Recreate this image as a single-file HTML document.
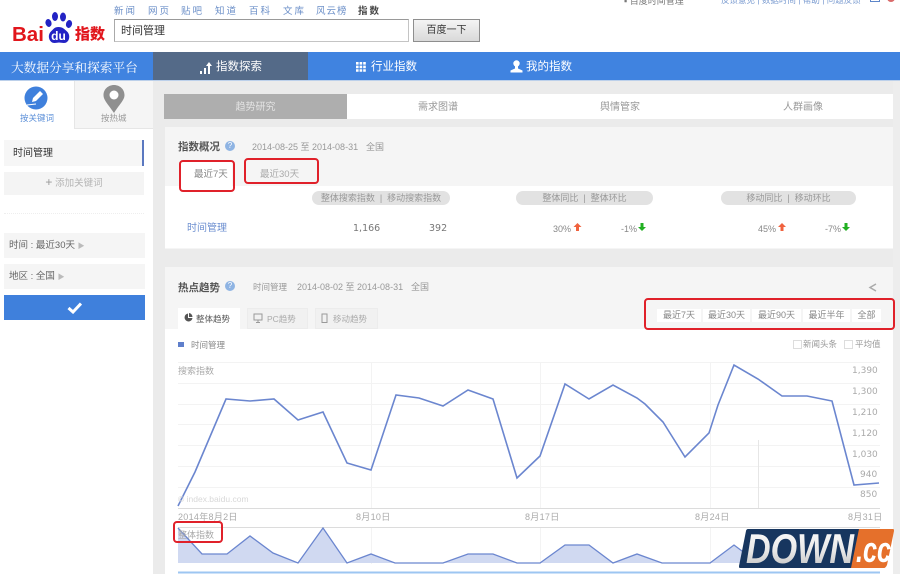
<!DOCTYPE html>
<html><head><meta charset="utf-8"><style>
html,body{margin:0;padding:0;background:#fff}
body{width:900px;height:574px;overflow:hidden;position:relative;font-family:"Liberation Sans","Noto Sans CJK SC",sans-serif;font-size:9px;color:#888}
#p{position:absolute;left:0;top:0;width:900px;height:574px;overflow:hidden;filter:blur(.35px)}
.a{position:absolute;white-space:nowrap}
.r{position:absolute;border:2px solid #e0212a;border-radius:4px;box-sizing:border-box}
.pill{position:absolute;background:#e2e2e2;border-radius:7px;height:14px;line-height:15px;text-align:center;color:#999;font-size:9px;white-space:nowrap}
.top{color:#6b8fc8;font-size:9.5px;letter-spacing:2px;top:3px}
.w{color:#fff}
.b{position:absolute;top:309px;height:13px;background:#fff;text-align:center;line-height:13px;font-size:9px;color:#888;white-space:nowrap}
.y{position:absolute;white-space:nowrap;font:9px/12px 'DejaVu Sans',sans-serif;color:#aaa}
.x{position:absolute;top:511px;font-size:9px;line-height:13px;color:#aaa;letter-spacing:.3px;white-space:nowrap}
.n{position:absolute;top:222px;font-size:9px;line-height:14px;color:#888;white-space:nowrap}
</style></head><body><div id="p">
<!-- header -->
<div class="a top" style="left:114px">新闻</div>
<div class="a top" style="left:148px">网页</div>
<div class="a top" style="left:181px">贴吧</div>
<div class="a top" style="left:215px">知道</div>
<div class="a top" style="left:249px">百科</div>
<div class="a top" style="left:283px">文库</div>
<div class="a top" style="left:316px;letter-spacing:1px">风云榜</div>
<div class="a top" style="left:358px;color:#444;font-weight:bold">指数</div>
<div class="a" style="left:12px;top:24px;font:bold 20.500px/22px 'Liberation Sans',sans-serif;color:#e1161c">Bai</div>
<svg class="a" style="left:44px;top:11px" width="30" height="33" viewBox="0 0 30 33"><g fill="#2323c4"><ellipse cx="4.500" cy="12" rx="3" ry="4" transform="rotate(-15 4.500 12)"/><ellipse cx="11" cy="5.500" rx="3" ry="4.500"/><ellipse cx="19" cy="6" rx="3" ry="4.500"/><ellipse cx="25" cy="13" rx="3" ry="4" transform="rotate(15 25 13)"/><path d="M14.500 16c-4 0-5 2-8 5-3.500 4-1 11 4 11 2 0 3-.5 4.500-.5s3 .5 5 .5c5 0 7-7 3.500-11-3-3-5-5-9-5z"/></g><text x="14.500" y="29" text-anchor="middle" font-family="Liberation Sans" font-size="12" font-weight="bold" fill="#fff">du</text></svg>
<div class="a" style="left:75px;top:23px;font:900 15px/22px 'Noto Sans CJK SC',sans-serif;color:#e1161c">指数</div>
<div class="a" style="left:114px;top:19px;width:295px;height:23px;box-sizing:border-box;border:1px solid #c4c4c4;border-top-color:#999;border-left-color:#aaa;background:#fff;font-size:11px;line-height:22px;color:#333;padding-left:6px">时间管理</div>
<div class="a" style="left:413px;top:19px;width:67px;height:23px;box-sizing:border-box;border:1px solid #8e8e8e;background:linear-gradient(#f4f4f4,#d9d9d9);font-size:10px;line-height:22px;color:#333;text-align:center">百度一下</div>
<div class="a" style="left:624px;top:-6px;font-size:9px;color:#777">▪ 百度时间管理</div>
<div class="a" style="left:721px;top:-6px;font-size:8.500px;color:#7a9bd0">反馈意见 | 数据时间 | 帮助 | 问题反馈</div>
<div class="a" style="left:870px;top:-4px;width:10px;height:6px;border:1px solid #5d86c9;box-sizing:border-box"></div>
<div class="a" style="left:887px;top:-4px;width:8px;height:6px;border-radius:0 0 4px 4px;background:#d96a6a"></div>
<!-- nav -->
<div class="a" style="left:0;top:52px;width:900px;height:28px;background:#4083e0"></div>
<div class="a" style="left:153px;top:52px;width:155px;height:28px;background:#546a88"></div>
<div class="a" style="left:0;top:80px;width:900px;height:1px;background:#bcd0ea"></div>
<div class="a w" style="left:11px;top:58px;font:12.700px/18px 'Noto Serif CJK SC',serif">大数据分享和探索平台</div>
<svg class="a" style="left:199px;top:60px" width="14" height="14"><path d="M1 11h2v3H1zM5 8h2v6H5z" fill="#fff"/><path d="M9 14V6H7l3-4 3 4h-2v8z" fill="#fff"/></svg>
<div class="a w" style="left:216px;top:59px;font-size:11.500px;line-height:17px">指数探索</div>
<svg class="a" style="left:356px;top:62px" width="10" height="10"><path d="M0 0h2.600v2.600H0zM3.600 0h2.600v2.600H3.600zM7.200 0h2.600v2.600H7.200zM0 3.600h2.600v2.600H0zM3.600 3.600h2.600v2.600H3.600zM7.200 3.600h2.600v2.600H7.200zM0 7.200h2.600v2.600H0zM3.600 7.200h2.600v2.600H3.600zM7.200 7.200h2.600v2.600H7.200z" fill="#fff"/></svg>
<div class="a w" style="left:371px;top:59px;font-size:11.500px;line-height:17px">行业指数</div>
<svg class="a" style="left:510px;top:60px" width="13" height="13"><circle cx="6.500" cy="3.500" r="3.200" fill="#fff"/><path d="M5 6h3v2.500l4.500 2V12.500H.5V10.500L5 8.500z" fill="#fff"/></svg>
<div class="a w" style="left:526px;top:59px;font-size:11.500px;line-height:17px">我的指数</div>
<!-- sidebar -->
<div class="a" style="left:153px;top:81px;width:747px;height:493px;background:#ebebeb"></div>
<div class="a" style="left:74px;top:81px;width:79px;height:48px;background:#f5f5f5;border-left:1px solid #e6e6e6;border-bottom:1px solid #e6e6e6;box-sizing:border-box"></div>
<svg class="a" style="left:24px;top:86px" width="24" height="24"><circle cx="12" cy="12" r="11.500" fill="#3f80dc"/><path d="M8 16l1-4 7-7 3 3-7 7z" fill="#fff"/><path d="M3 19l9-1" stroke="#fff" stroke-width="1"/></svg>
<div class="a" style="left:20px;top:112px;font-size:8.500px;color:#5b8fd8;line-height:13px">按关键词</div>
<svg class="a" style="left:102px;top:84px" width="24" height="30"><path d="M12 1C6 1 1.500 5.500 1.500 11c0 5 4 8.500 10.500 18C18 19.500 22.500 16 22.500 11 22.500 5.500 18 1 12 1z" fill="#8f8f8f"/><circle cx="12" cy="11" r="4.500" fill="#fff"/></svg>
<div class="a" style="left:101px;top:112px;font-size:8.500px;color:#999;line-height:13px">按热城</div>
<div class="a" style="left:4px;top:140px;width:140px;height:26px;box-sizing:border-box;background:#f6f6f6;border-right:2px solid #5a78c0;font-size:10px;line-height:28px;color:#333;padding-left:9px">时间管理</div>
<div class="a" style="left:4px;top:172px;width:140px;height:23px;background:#f4f4f4;text-align:center;font-size:9.500px;line-height:21px;color:#b5b5b5"><span style="font-size:12px;color:#999">+</span> 添加关键词</div>
<div class="a" style="left:4px;top:213px;width:140px;height:0;border-top:1px dotted #eee"></div>
<div class="a" style="left:4px;top:233px;width:141px;height:25px;background:#f5f5f5;font-size:9.500px;line-height:26px;color:#666;padding-left:5px;box-sizing:border-box">时间 : 最近30天 <span style="color:#bbb;font-size:7px">▶</span></div>
<div class="a" style="left:4px;top:264px;width:141px;height:25px;background:#f5f5f5;font-size:9.500px;line-height:25px;color:#666;padding-left:5px;box-sizing:border-box">地区 : 全国 <span style="color:#bbb;font-size:7px">▶</span></div>
<div class="a" style="left:4px;top:295px;width:141px;height:25px;background:#3f80dc"></div>
<svg class="a" style="left:67px;top:302px" width="15" height="12"><path d="M1.500 6l4.500 4 8-8.500" fill="none" stroke="#fff" stroke-width="3"/></svg>
<!-- tabs -->
<div class="a" style="left:164px;top:94px;width:729px;height:25px;background:#fff"></div>
<div class="a" style="left:164px;top:94px;width:183px;height:25px;background:#aeaeae;color:#e3e3e3;text-align:center;line-height:27px;font-size:10px">趋势研究</div>
<div class="a" style="left:418px;top:101px;font-size:10px;line-height:14px;color:#999">需求图谱</div>
<div class="a" style="left:600px;top:101px;font-size:10px;line-height:14px;color:#999">舆情管家</div>
<div class="a" style="left:783px;top:101px;font-size:10px;line-height:14px;color:#999">人群画像</div>
<!-- panel 1 -->
<div class="a" style="left:165px;top:127px;width:728px;height:122px;background:#f5f5f5"></div>
<div class="a" style="left:165px;top:186px;width:728px;height:62px;background:#fff"></div>
<div class="a" style="left:178px;top:139px;font-size:10.500px;font-weight:bold;line-height:16px;color:#555">指数概况</div>
<div class="a" style="left:225px;top:141px;width:10px;height:10px;border-radius:50%;background:#8fb4e3;color:#fff;font-size:8px;line-height:10px;text-align:center">?</div>
<div class="a" style="left:252px;top:141px;font-size:9px;line-height:13px;color:#999">2014-08-25 至 2014-08-31</div>
<div class="a" style="left:366px;top:141px;font-size:9px;line-height:13px;color:#999">全国</div>
<div class="a" style="left:180px;top:161px;width:52px;height:30px;background:#fff"></div>
<div class="a" style="left:194px;top:168px;font-size:9.500px;line-height:13px;color:#888">最近7天</div>
<div class="a" style="left:260px;top:168px;font-size:9.500px;line-height:13px;color:#aaa">最近30天</div>
<div class="pill" style="left:312px;top:191px;width:138px">整体搜索指数 &nbsp;|&nbsp; 移动搜索指数</div>
<div class="pill" style="left:516px;top:191px;width:137px">整体同比 &nbsp;|&nbsp; 整体环比</div>
<div class="pill" style="left:721px;top:191px;width:135px">移动同比 &nbsp;|&nbsp; 移动环比</div>
<div class="a" style="left:187px;top:222px;font-size:10px;line-height:14px;color:#6d8fd0">时间管理</div>
<div class="a" style="left:353px;top:222px;font:9.500px/14px 'DejaVu Sans',sans-serif;color:#777">1,166</div>
<div class="a" style="left:429px;top:222px;font:9.500px/14px 'DejaVu Sans',sans-serif;color:#777">392</div>
<div class="n" style="left:553px">30%</div>
<div class="n" style="left:621px">-1%</div>
<div class="n" style="left:758px">45%</div>
<div class="n" style="left:825px">-7%</div>
<svg class="a" style="left:0;top:0" width="900" height="574">
<path d="M577.500 223l-4 4h2.500v4h3v-4h2.500zM782 223l-4 4h2.500v4h3v-4h2.500z" fill="#f0623e"/>
<path d="M642 231l-4-4h2.500v-4h3v4h2.500zM846 231l-4-4h2.500v-4h3v4h2.500z" fill="#22b022"/>
</svg>
<!-- panel 2 -->
<div class="a" style="left:165px;top:267px;width:728px;height:307px;background:#f5f5f5"></div>
<div class="a" style="left:165px;top:329px;width:728px;height:245px;background:#fff"></div>
<div class="a" style="left:178px;top:280px;font-size:10.500px;font-weight:bold;line-height:16px;color:#555">热点趋势</div>
<div class="a" style="left:225px;top:281px;width:10px;height:10px;border-radius:50%;background:#8fb4e3;color:#fff;font-size:8px;line-height:10px;text-align:center">?</div>
<div class="a" style="left:253px;top:281px;font-size:8.500px;line-height:13px;color:#999">时间管理</div>
<div class="a" style="left:297px;top:281px;font-size:9px;line-height:13px;color:#999">2014-08-02 至 2014-08-31</div>
<div class="a" style="left:411px;top:281px;font-size:9px;line-height:13px;color:#999">全国</div>
<svg class="a" style="left:868px;top:283px" width="10" height="10"><path d="M8 1L2 4.500 8 8" fill="none" stroke="#aaa" stroke-width="1.500"/></svg>
<div class="a" style="left:178px;top:308px;width:62px;height:22px;background:#fff"></div>
<div class="a" style="left:247px;top:308px;width:61px;height:21px;background:#f1f1f1;border:1px solid #ececec;box-sizing:border-box"></div>
<div class="a" style="left:315px;top:308px;width:63px;height:21px;background:#f1f1f1;border:1px solid #ececec;box-sizing:border-box"></div>
<svg class="a" style="left:184px;top:313px" width="9" height="9"><path d="M4 .5A4 4 0 1 0 8.500 5H4z" fill="#555"/><path d="M5 0A4 4 0 0 1 8.500 4H5z" fill="#555"/></svg>
<div class="a" style="left:196px;top:312px;font-size:8.500px;line-height:14px;color:#555">整体趋势</div>
<svg class="a" style="left:253px;top:313px" width="11" height="11"><path d="M1 1h8v6H1zM5 7v2M3 9.500h4" fill="none" stroke="#999"/></svg>
<div class="a" style="left:267px;top:312px;font-size:8.500px;line-height:14px;color:#aaa">PC趋势</div>
<svg class="a" style="left:321px;top:313px" width="8" height="11"><path d="M1 1h5v8.500H1z" fill="none" stroke="#999"/></svg>
<div class="a" style="left:333px;top:312px;font-size:8.500px;line-height:14px;color:#aaa">移动趋势</div>
<!-- range buttons -->
<div class="b" style="left:657px;width:44px">最近7天</div>
<div class="b" style="left:703px;width:47px">最近30天</div>
<div class="b" style="left:752px;width:49px">最近90天</div>
<div class="b" style="left:803px;width:47px">最近半年</div>
<div class="b" style="left:852px;width:29px">全部</div>
<!-- legend -->
<div class="a" style="left:178px;top:342px;width:6px;height:5px;background:#5f7fcb"></div>
<div class="a" style="left:191px;top:339px;font-size:8.500px;line-height:12px;color:#888">时间管理</div>
<div class="a" style="left:793px;top:340px;width:7px;height:7px;border:1px solid #ddd"></div>
<div class="a" style="left:803px;top:338px;font-size:8.500px;line-height:12px;color:#999">新闻头条</div>
<div class="a" style="left:844px;top:340px;width:7px;height:7px;border:1px solid #ddd"></div>
<div class="a" style="left:855px;top:338px;font-size:8.500px;line-height:12px;color:#999">平均值</div>
<!-- chart -->
<svg class="a" style="left:0;top:0" width="900" height="574">
<g stroke="#f3f3f3" fill="none">
<path d="M178 362.500H880M178 383.500H880M178 404.500H880M178 424.500H880M178 445.500H880M178 466.500H880M178 487.500H880"/>
<path d="M371.500 362V508M540.500 362V508M710.500 362V508M371.500 528V564M540.500 528V564M710.500 528V564"/>
</g>
<path d="M758.500 440V508" stroke="#e6e6e6"/>
<path d="M178 508.500H880M178 527.500H880" stroke="#dcdcdc"/>
<path d="M178 506L195 472L226 399L250 401L274 399L298 420L323 412L347 463L371 470L396 395L419 398L443 406L468 390L493 399L517 478L540 456L565 384L589 399L613 385L637 398L645 404L663 422L685 457L709 433L718 405L734 365L758 379L782 396L807 396L832 401L854 485L879 483" fill="none" stroke="#6b86cf" stroke-width="1.600"/>
<path d="M178 528L202 554L227 554L250 536L273 553L298 563L323 528L347 563L371 554L395 563L443 563L468 554L493 554L517 563L540 563L565 545L589 545L613 563L637 554L662 563L710 563L734 545L758 563L879 563V563H178z" fill="#d0d9f1"/>
<path d="M178 528L202 554L227 554L250 536L273 553L298 563L323 528L347 563L371 554L395 563L443 563L468 554L493 554L517 563L540 563L565 545L589 545L613 563L637 554L662 563L710 563L734 545L758 563L879 563" fill="none" stroke="#6b86cf" stroke-width="1.300"/>
<path d="M178 572.500H880" stroke="#9dc6f2" stroke-width="2"/>
</svg>
<div class="a" style="left:178px;top:365px;font-size:9px;line-height:12px;color:#aaa">搜索指数</div>
<div class="a" style="left:178px;top:493px;font-size:8.500px;line-height:12px;color:#d8d8d8">© index.baidu.com</div>
<div class="y" style="left:852px;top:365px">1,390</div>
<div class="y" style="left:852px;top:386px">1,300</div>
<div class="y" style="left:852px;top:407px">1,210</div>
<div class="y" style="left:852px;top:428px">1,120</div>
<div class="y" style="left:852px;top:449px">1,030</div>
<div class="y" style="left:860px;top:469px">940</div>
<div class="y" style="left:860px;top:489px">850</div>
<div class="x" style="left:178px">2014年8月2日</div>
<div class="x" style="left:356px">8月10日</div>
<div class="x" style="left:525px">8月17日</div>
<div class="x" style="left:695px">8月24日</div>
<div class="x" style="left:848px">8月31日</div>
<div class="a" style="left:178px;top:529px;font-size:9px;line-height:13px;color:#aaa">整体指数</div>
<!-- right scroll edge -->
<div class="a" style="left:893px;top:81px;width:7px;height:493px;background:#ededed"></div>
<!-- red annotations -->
<div class="r" style="left:179px;top:160px;width:56px;height:32px"></div>
<div class="r" style="left:244px;top:158px;width:75px;height:26px"></div>
<div class="r" style="left:644px;top:298px;width:251px;height:32px"></div>
<div class="r" style="left:173px;top:521px;width:50px;height:22px"></div>
<!-- DOWN.cc -->
<svg class="a" style="left:738px;top:526px" width="160" height="44">
<defs><linearGradient id="g" x1="0" y1="0" x2="0" y2="1"><stop offset="0" stop-color="#fff"/><stop offset=".55" stop-color="#e8e8e8"/><stop offset="1" stop-color="#bdbdbd"/></linearGradient></defs>
<path d="M10 3H123L115 42H2C1 42 1 41 1 40L8 5C8 4 9 3 10 3z" fill="#17365f"/>
<path d="M121 3H155C156 3 156 4 156 5L149 39C148 41 147 42 146 42H113z" fill="#e5702b"/>
<text x="8" y="37" font-family="Liberation Sans" font-size="42" font-weight="bold" font-style="italic" fill="url(#g)" textLength="108" lengthAdjust="spacingAndGlyphs">DOWN</text>
<text x="118" y="36" font-family="Liberation Sans" font-size="36" font-weight="bold" font-style="italic" fill="#fff" textLength="35" lengthAdjust="spacingAndGlyphs">.cc</text>
</svg>
</div></body></html>
